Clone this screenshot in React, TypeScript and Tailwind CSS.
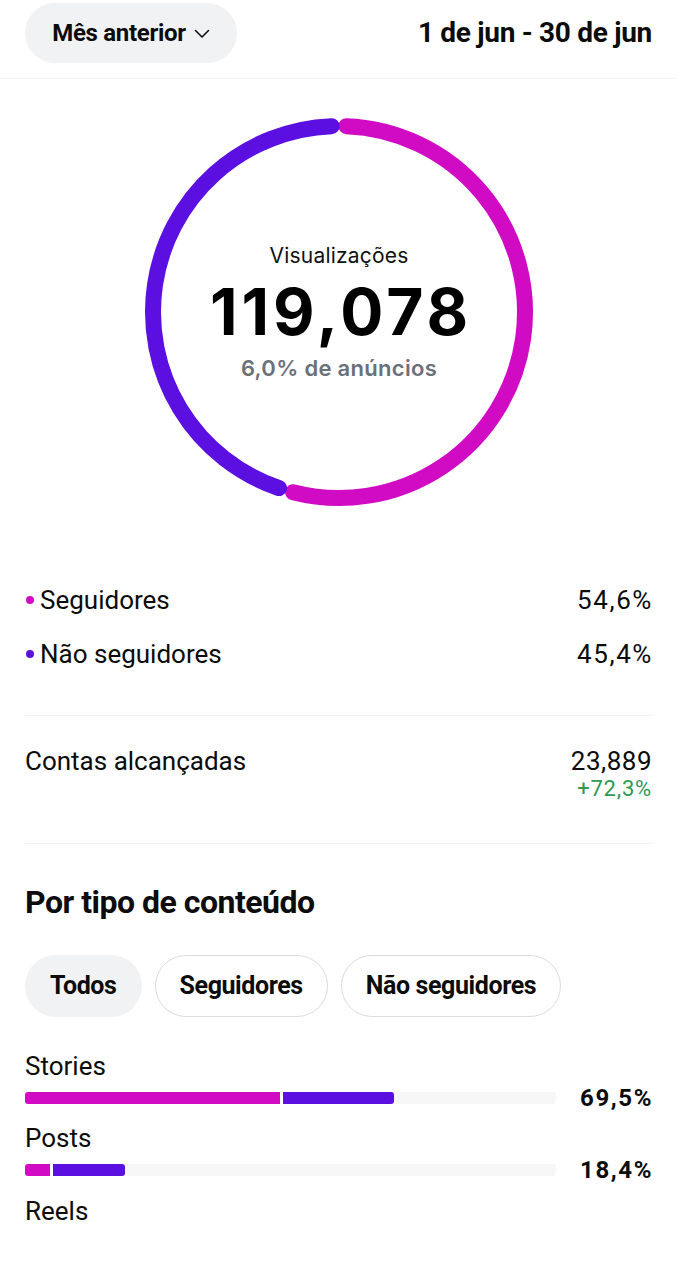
import React from "react";

const MAGENTA = "#d10bc4";
const PURPLE = "#5b0fe0";

function Donut() {
  const cx = 200;
  const cy = 200;
  const r = 186;
  const pt = (deg: number) => {
    const a = (deg * Math.PI) / 180;
    return [cx + r * Math.sin(a), cy - r * Math.cos(a)];
  };
  const arc = (from: number, to: number) => {
    const [x1, y1] = pt(from);
    const [x2, y2] = pt(to);
    const large = to - from > 180 ? 1 : 0;
    return `M ${x1} ${y1} A ${r} ${r} 0 ${large} 1 ${x2} ${y2}`;
  };
  const gap = 4.5;
  const purpleDeg = 360 * 0.454;
  const magStart = gap / 2;
  const magEnd = 360 - purpleDeg - gap / 2;
  const purStart = 360 - purpleDeg + gap / 2;
  const purEnd = 360 - gap / 2;
  return (
    <svg width="400" height="400" viewBox="0 0 400 400" className="absolute inset-0">
      <path d={arc(magStart, magEnd)} stroke={MAGENTA} strokeWidth="16" fill="none" strokeLinecap="round" />
      <path d={arc(purStart, purEnd)} stroke={PURPLE} strokeWidth="16" fill="none" strokeLinecap="round" />
    </svg>
  );
}

function Bar({ mag, pur }: { mag: number; pur: number }) {
  return (
    <div className="flex-1 h-[12px] bg-[#f7f7f8] rounded-[3px] flex">
      <div className="h-full rounded-l-[3px] bg-[#d10bc4]" style={{ width: `${mag}px` }} />
      <div className="w-[3px] h-full bg-white" />
      <div className="h-full rounded-r-[3px] bg-[#5b0fe0]" style={{ width: `${pur}px` }} />
    </div>
  );
}

export default function App() {
  return (
    <div
      className="w-[677px] h-[1280px] bg-white text-[#0c0c0c] overflow-hidden"
      style={{ fontFamily: "Roboto, 'Liberation Sans', sans-serif" }}
    >
      {/* header */}
      <div className="h-[78px] flex items-start justify-between px-[25px] pt-[3px]">
        <div className="h-[60px] w-[212px] rounded-full bg-[#f1f2f4] flex items-center justify-center gap-[8px]">
          <span className="text-[24px] font-bold tracking-[-0.3px]">Mês anterior</span>
          <svg width="16" height="10" viewBox="0 0 16 10" className="mt-[1px]">
            <path d="M1.5 1.5 L8 8 L14.5 1.5" stroke="#111" strokeWidth="1.6" fill="none" strokeLinecap="round" strokeLinejoin="round" />
          </svg>
        </div>
        <div className="h-[60px] flex items-center text-[28px] font-bold tracking-[-0.3px]">1 de jun - 30 de jun</div>
      </div>
      <div className="h-px bg-[#f0f0f2]" />

      {/* donut */}
      <div className="flex justify-center pt-[33px]">
        <div className="relative w-[400px] h-[400px] ml-[1px]">
          <Donut />
          <div className="absolute inset-0 flex flex-col items-center justify-center" style={{ fontFamily: "Inter, sans-serif" }}>
            <div className="text-[21px] text-[#111] leading-[26px] tracking-[0.2px]">Visualizações</div>
            <div className="text-[64px] font-bold leading-[72px] mt-[7px] tracking-[4px] text-black ml-[4px]">119,078</div>
            <div className="text-[22px] font-semibold text-[#6b7079] leading-[26px] mt-[7px] tracking-[0.3px]">6,0% de anúncios</div>
          </div>
        </div>
      </div>

      {/* legend */}
      <div className="px-[25px] pt-[73px]">
        <div className="flex items-center justify-between h-[30px]">
          <div className="flex items-center gap-[6px]">
            <span className="w-[8px] h-[8px] rounded-full bg-[#d10bc4] ml-[1px]" />
            <span className="text-[26px]">Seguidores</span>
          </div>
          <span className="text-[26px] tracking-[1.6px] -mr-[1px]">54,6%</span>
        </div>
        <div className="flex items-center justify-between h-[30px] mt-[24px]">
          <div className="flex items-center gap-[6px]">
            <span className="w-[8px] h-[8px] rounded-full bg-[#5b0fe0] ml-[1px]" />
            <span className="text-[26px]">Não seguidores</span>
          </div>
          <span className="text-[26px] tracking-[1.6px] -mr-[1px]">45,4%</span>
        </div>
        <div className="h-px bg-[#f0f0f2] mt-[46px]" />

        <div className="flex justify-between pt-[30px]">
          <span className="text-[26px] leading-[30px]">Contas alcançadas</span>
          <div className="flex flex-col items-end">
            <span className="text-[26px] leading-[30px] tracking-[0.5px]">23,889</span>
            <span className="text-[22px] leading-[26px] text-[#2e9a52] tracking-[0.8px]">+72,3%</span>
          </div>
        </div>
        <div className="h-px bg-[#f0f0f2] mt-[41px]" />

        <div className="text-[32px] font-bold tracking-[-0.5px] mt-[40px] leading-[36px]">Por tipo de conteúdo</div>

        <div className="flex gap-[13px] mt-[35px]">
          <div className="h-[62px] px-[25px] rounded-full bg-[#f1f2f4] flex items-center text-[25px] font-bold tracking-[-0.4px]">Todos</div>
          <div className="h-[62px] px-[24px] rounded-full border border-[#dcdcdf] flex items-center text-[25px] font-bold tracking-[-0.4px]">Seguidores</div>
          <div className="h-[62px] px-[24px] rounded-full border border-[#dcdcdf] flex items-center text-[25px] font-bold tracking-[-0.4px]">Não seguidores</div>
        </div>

        <div className="mt-[34px] text-[26px] leading-[30px]">Stories</div>
        <div className="flex items-center mt-[7px] h-[20px]">
          <Bar mag={255} pur={111} />
          <span className="w-[97px] text-right text-[24px] font-bold tracking-[1.6px] -mr-[1px]">69,5%</span>
        </div>
        <div className="mt-[15px] text-[26px] leading-[30px]">Posts</div>
        <div className="flex items-center mt-[7px] h-[20px]">
          <Bar mag={25} pur={72} />
          <span className="w-[97px] text-right text-[24px] font-bold tracking-[1.6px] -mr-[1px]">18,4%</span>
        </div>
        <div className="mt-[16px] text-[26px] leading-[30px]">Reels</div>
      </div>
    </div>
  );
}
